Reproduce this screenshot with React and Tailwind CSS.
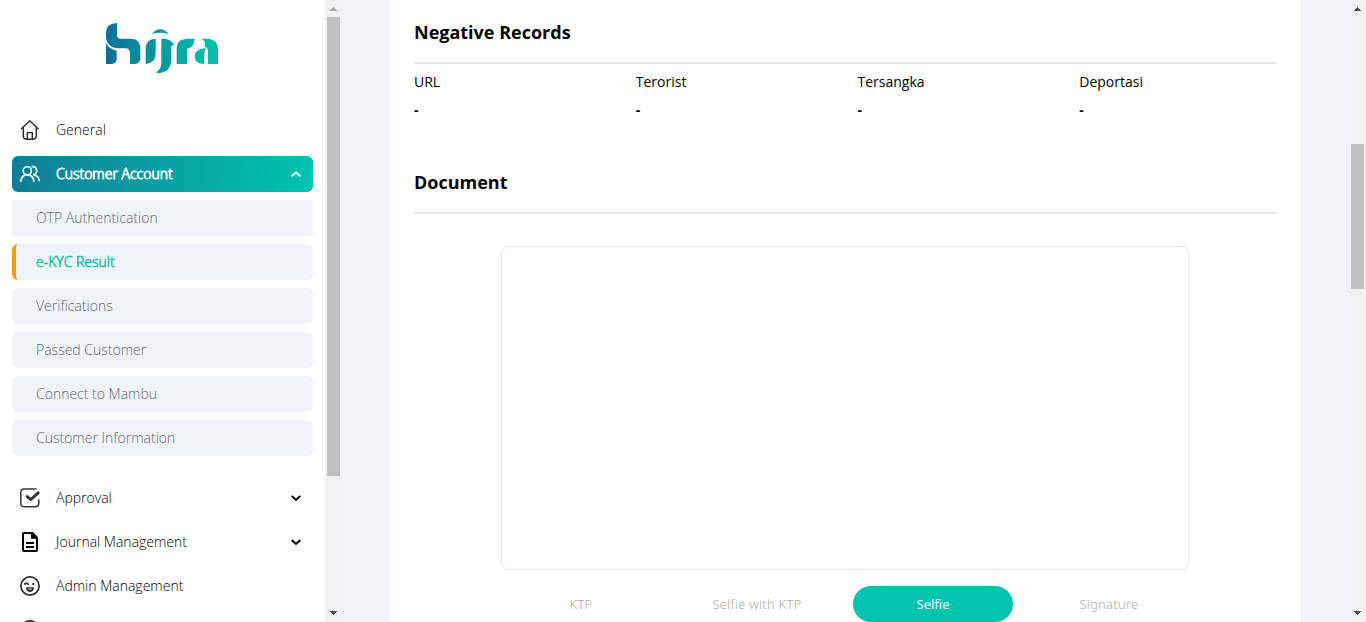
import React from "react";

function Logo() {
  return (
    <svg className="h-[50px] w-[112px]" viewBox="48 39 336 150" fill="url(#hijra)">
      <defs>
        <linearGradient id="hijra" gradientUnits="userSpaceOnUse" x1="48" y1="150" x2="384" y2="90">
          <stop offset="0" stopColor="#0a6f98" />
          <stop offset="0.45" stopColor="#0b96a0" />
          <stop offset="1" stopColor="#06c4ab" />
        </linearGradient>
      </defs>
      <path d="M81 39V74Q81 86 93 86H122Q151 86 151 115V150Q146 162 132 162H120V129Q120 115 106 115H80Q52 112 48 84V66Q48 41 81 39Z" />
      <path d="M48 99Q57 117 80 122V150Q77 162 62 162H48Z" />
      <path d="M167 162V117Q167 86 197 86V130Q197 160 167 162Z" />
      <path d="M186 72Q196 58 211 58Q226 58 236 72Q224 68 211 68Q198 68 186 72Z" />
      <path d="M214 86H226Q242 88 253 104L244 107V147Q244 187 205 189L197 187Q214 180 214 157Z" />
      <path d="M260 162V117Q260 86 294 86H314Q312 113 291 116V162Z" />
      <path d="M335 86H349Q384 86 384 118V162H354V126Q354 110 343 111Q350 96 335 86Z" />
      <path d="M314 138Q316 115 349 115Q343 122 343 138V162Q315 162 314 138Z" />
    </svg>
  );
}

function HomeIcon() {
  return (
    <svg className="size-5 overflow-visible" viewBox="0 0 20 20" fill="none" stroke="#292929" strokeWidth="1.4" strokeLinecap="round" strokeLinejoin="round">
      <path d="M1.4 8.7 9.8.8l8.4 7.9" />
      <path d="M3.3 7.5v8.6q0 3.1 3.1 3.1h6.8q3.1 0 3.1-3.1V7.5" />
      <path d="M7.3 19v-6.4h5V19" />
    </svg>
  );
}

function UsersIcon() {
  return (
    <svg className="size-5 overflow-visible" viewBox="0 0 20 20" fill="none" stroke="white" strokeWidth="1.6" strokeLinecap="round">
      <circle cx="7.3" cy="6.8" r="4.1" />
      <path d="M.7 17.3q.8-6.4 6.6-6.4t6.6 6.4" />
      <path d="M12.2 2.6a4.1 4.1 0 0 1 1.6 8" />
      <path d="M14.2 11q4.3.6 5.1 5.6" />
    </svg>
  );
}

function ApprovalIcon() {
  return (
    <svg className="size-5 overflow-visible" viewBox="0 0 20 20" fill="none" stroke="#333" strokeLinecap="round" strokeLinejoin="round">
      <path strokeWidth="1.5" d="M16 1H4.5Q.8 1 .8 4.5v10.7Q.8 18.8 4.5 18.8h10.8q3.5 0 3.5-3.5V12" />
      <path strokeWidth="2.9" d="m7.2 8.6 3.5 3 7.5-6.7" />
    </svg>
  );
}

function DocumentIcon() {
  return (
    <svg className="size-5 overflow-visible" viewBox="0 0 20 20">
      <path d="M4 0h9l5 5.2V18q0 2-2 2H4q-2 0-2-2V2q0-2 2-2Zm0 2v16h12V6.7h-5V2Z" fill="black" fillRule="evenodd" />
      <path d="M6 11h8M6 15h8" stroke="black" strokeWidth="1.8" />
    </svg>
  );
}

function SmileIcon() {
  return (
    <svg className="size-5 overflow-visible" viewBox="0 0 20 20" fill="none" stroke="#2c2c2c" strokeWidth="1.7" strokeLinecap="round">
      <circle cx="10" cy="10" r="9.1" />
      <path d="M4.9 8q1.5-1.2 3.3.2" />
      <circle cx="13.2" cy="8" r=".8" fill="#2c2c2c" strokeWidth=".8" />
      <path d="M6.2 11.2h7.6v1q-.3 3.8-3.8 3.8t-3.8-3.8Z" fill="#2c2c2c" stroke="none" />
      <path d="M8.8 13h2.4" stroke="white" strokeWidth="1" />
    </svg>
  );
}

function CircleIcon() {
  return (
    <svg className="size-5 overflow-visible" viewBox="0 0 20 20" fill="none" stroke="#2c2c2c" strokeWidth="1.7">
      <circle cx="10" cy="10" r="9.1" />
    </svg>
  );
}

function Chevron({ up }) {
  return (
    <svg className="h-2.5 w-2.5" viewBox="0 0 10 10" fill="none" stroke="currentColor" strokeWidth="1.9">
      <path d={up ? "m.7 7.3 4.3-4 4.3 4" : "m.7 3 4.3 4 4.3-4"} />
    </svg>
  );
}

function NavRow({ icon, label, chevron, active }) {
  return (
    <div
      className={
        active
          ? "flex h-9 items-center rounded-md bg-[linear-gradient(102deg,#117b98,#00c4ae)] pl-2 pr-3 text-white"
          : "flex h-9 items-center pl-2 pr-3 text-black"
      }
    >
      {icon}
      <span className={active ? "ml-4 flex-1 [-webkit-text-stroke:0.8px_white]" : "ml-4 flex-1"}>{label}</span>
      {chevron && <Chevron up={active} />}
    </div>
  );
}

const subItems = ["OTP Authentication", "e-KYC Result", "Verifications", "Passed Customer", "Connect to Mambu", "Customer Information"];

function subClass(i) {
  if (i === 0) return "flex h-9 items-center bg-[#eff4f9] pl-6 text-[#5f6570]";
  if (i === 1) return "flex h-9 items-center rounded-md border-l-4 border-[#f59e0b] bg-[#eff4f9] pl-5 text-[#1fbfa8] [-webkit-text-stroke:0.6px_#1fbfa8]";
  return "flex h-9 items-center rounded-md bg-[#eff4f9] pl-6 text-[#5f6570]";
}

function Arrow({ down, muted }) {
  return (
    <svg className="h-[17px] w-[17px] shrink-0" viewBox="0 0 17 17" shapeRendering="crispEdges">
      <path d={down ? "M5 6h7v1h-1v1h-1v1h-1v1h-1v-1h-1v-1h-1v-1h-1z" : "M8 7h1v1h1v1h1v1h1v1h-7v-1h1v-1h1v-1h1z"} fill={muted ? "#a3a3a3" : "#505050"} />
    </svg>
  );
}

function Section({ title, children, className }) {
  return (
    <section className={className}>
      <h2 className="h-7 text-lg leading-7 font-bold">{title}</h2>
      <div className="mt-4 h-0.5 bg-[#e5e7eb]" />
      {children}
    </section>
  );
}

export default function App() {
  return (
    <div className="flex h-[622px] w-[1366px] overflow-hidden bg-[#f1f5fa] font-['Open_Sans','Noto_Sans',sans-serif] text-sm text-black">
      <aside className="w-[325px] shrink-0 overflow-hidden bg-white pl-3 pr-3 font-light">
        <div className="flex h-28 justify-center pt-[23px] pr-px">
          <Logo />
        </div>
        <nav className="flex flex-col gap-2">
          <NavRow icon={<HomeIcon />} label="General" />
          <NavRow icon={<UsersIcon />} label="Customer Account" chevron active />
          {subItems.map((label, i) => (
            <div key={label} className={subClass(i)}>{label}</div>
          ))}
          <div className="mt-4 flex flex-col gap-2">
            <NavRow icon={<ApprovalIcon />} label="Approval" chevron />
            <NavRow icon={<DocumentIcon />} label="Journal Management" chevron />
            <NavRow icon={<SmileIcon />} label="Admin Management" />
            <NavRow icon={<CircleIcon />} label="" />
          </div>
        </nav>
      </aside>
      <div className="flex w-[17px] shrink-0 flex-col items-center bg-[#f1f1f1]">
        <Arrow muted />
        <div className="w-[13px] flex-1">
          <div className="h-[459px] bg-[#c1c1c1]" />
        </div>
        <Arrow down />
      </div>
      <main className="flex-1 px-12">
        <div className="h-full overflow-hidden bg-white px-6 pt-[18px]">
          <Section title="Negative Records" className="h-[150px]">
            <div className="mt-2 grid grid-cols-4 gap-x-6">
              {["URL", "Terorist", "Tersangka", "Deportasi"].map((name) => (
                <div key={name}>
                  <p className="h-5 leading-5">{name}</p>
                  <p className="mt-2 h-5 leading-5 font-bold">-</p>
                </div>
              ))}
            </div>
          </Section>
          <Section title="Document">
            <div className="ml-[87px] mt-8 h-[324px] w-[688px] rounded-lg border border-[#e5e7eb]" />
            <div className="ml-[87px] mt-4 grid w-[688px] grid-cols-4 gap-4 font-['Noto_Sans',sans-serif] text-[13px] font-light tracking-[0.25px]">
              {["KTP", "Selfie with KTP", "Selfie", "Signature"].map((name) => (
                <div
                  key={name}
                  className={
                    name === "Selfie"
                      ? "flex h-9 items-center justify-center rounded-full bg-[#00c4ae] font-normal tracking-normal text-white"
                      : "flex h-9 items-center justify-center text-[#a8a8a8]"
                  }
                >
                  {name}
                </div>
              ))}
            </div>
          </Section>
        </div>
      </main>
      <div className="flex w-[17px] shrink-0 flex-col items-center bg-[#f1f1f1]">
        <Arrow />
        <div className="w-[13px] flex-1 pt-[127px]">
          <div className="h-[145px] bg-[#c1c1c1]" />
        </div>
        <Arrow down />
      </div>
    </div>
  );
}
